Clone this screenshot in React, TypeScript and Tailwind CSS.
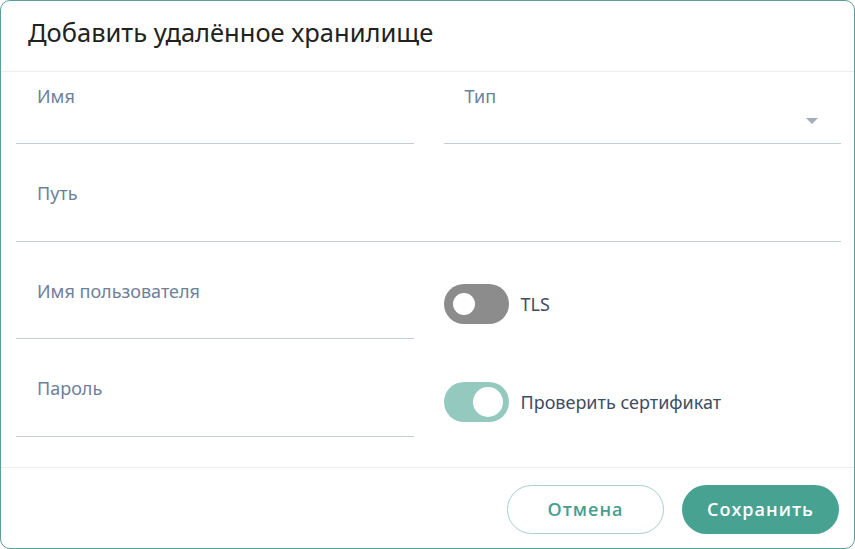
import React from "react";

function Field({ label, className = "", top = 14, select = false }: { label: string; className?: string; top?: number; select?: boolean }) {
  return (
    <div className={`relative border-b border-[#c5ccd6] ${className}`}>
      <div className="absolute left-[21px] text-[18px] leading-[24px] text-[#6e819a]" style={{ top }}>
        {label}
      </div>
      {select && (
        <svg className="absolute right-[23px] top-[46px]" width="12" height="6" viewBox="0 0 12 6">
          <path d="M0 0h12L6 6z" fill="#a4adb9" />
        </svg>
      )}
    </div>
  );
}

function Toggle({ on, label }: { on: boolean; label: string }) {
  return (
    <div className="flex items-center gap-[12px]">
      <div className={`relative h-[40px] w-[65px] rounded-full ${on ? "bg-[#93c9bf]" : "bg-[#8c8c8c]"}`}>
        {on ? (
          <div className="absolute right-[6px] top-[5px] h-[30px] w-[30px] rounded-full bg-white" />
        ) : (
          <div className="absolute left-[9px] top-[9px] h-[22px] w-[22px] rounded-full bg-white" />
        )}
      </div>
      <span className="text-[18px] text-[#3d4e62]">{label}</span>
    </div>
  );
}

export default function App() {
  return (
    <div
      className="flex h-[549px] w-[855px] flex-col overflow-hidden rounded-[10px] border border-[#5e9e9a] bg-white"
      style={{ fontFamily: '"Noto Sans", "Open Sans", sans-serif' }}
    >
      <div className="flex h-[71px] shrink-0 items-center border-b border-[#eeeeee] pb-[8px] pl-[27px]">
        <h1 className="text-[25.5px] font-normal leading-[34px] text-[#222222]">Добавить удалённое хранилище</h1>
      </div>
      <div className="flex-1 pl-[15px] pr-[13px]">
        <div className="grid grid-cols-2 gap-x-[30px]">
          <Field label="Имя" className="h-[72px]" top={12} />
          <Field label="Тип" className="h-[72px]" top={12} select />
          <Field label="Путь" className="col-span-2 h-[98px]" top={37} />
        </div>
        <div className="grid grid-cols-2 gap-x-[30px]">
          <div className="flex flex-col">
            <Field label="Имя пользователя" className="h-[97px]" top={37} />
            <Field label="Пароль" className="h-[98px]" top={37} />
          </div>
          <div className="flex flex-col gap-[58px] pt-[42px]">
            <Toggle on={false} label="TLS" />
            <Toggle on label="Проверить сертификат" />
          </div>
        </div>
      </div>
      <div className="flex h-[81px] shrink-0 items-center justify-end gap-[18px] border-t border-[#eeeeee] pr-[15px] pt-[3px]">
        <button
          className="h-[49px] w-[157px] rounded-full border border-[#a9cfca] text-[18px] font-semibold tracking-[1px] text-[#4a9d8f]"
          style={{ fontFamily: '"Open Sans", sans-serif' }}
        >
          Отмена
        </button>
        <button
          className="h-[49px] w-[157px] rounded-full bg-[#48a292] text-[18px] font-semibold tracking-[1px] text-white"
          style={{ fontFamily: '"Open Sans", sans-serif' }}
        >
          Сохранить
        </button>
      </div>
    </div>
  );
}
